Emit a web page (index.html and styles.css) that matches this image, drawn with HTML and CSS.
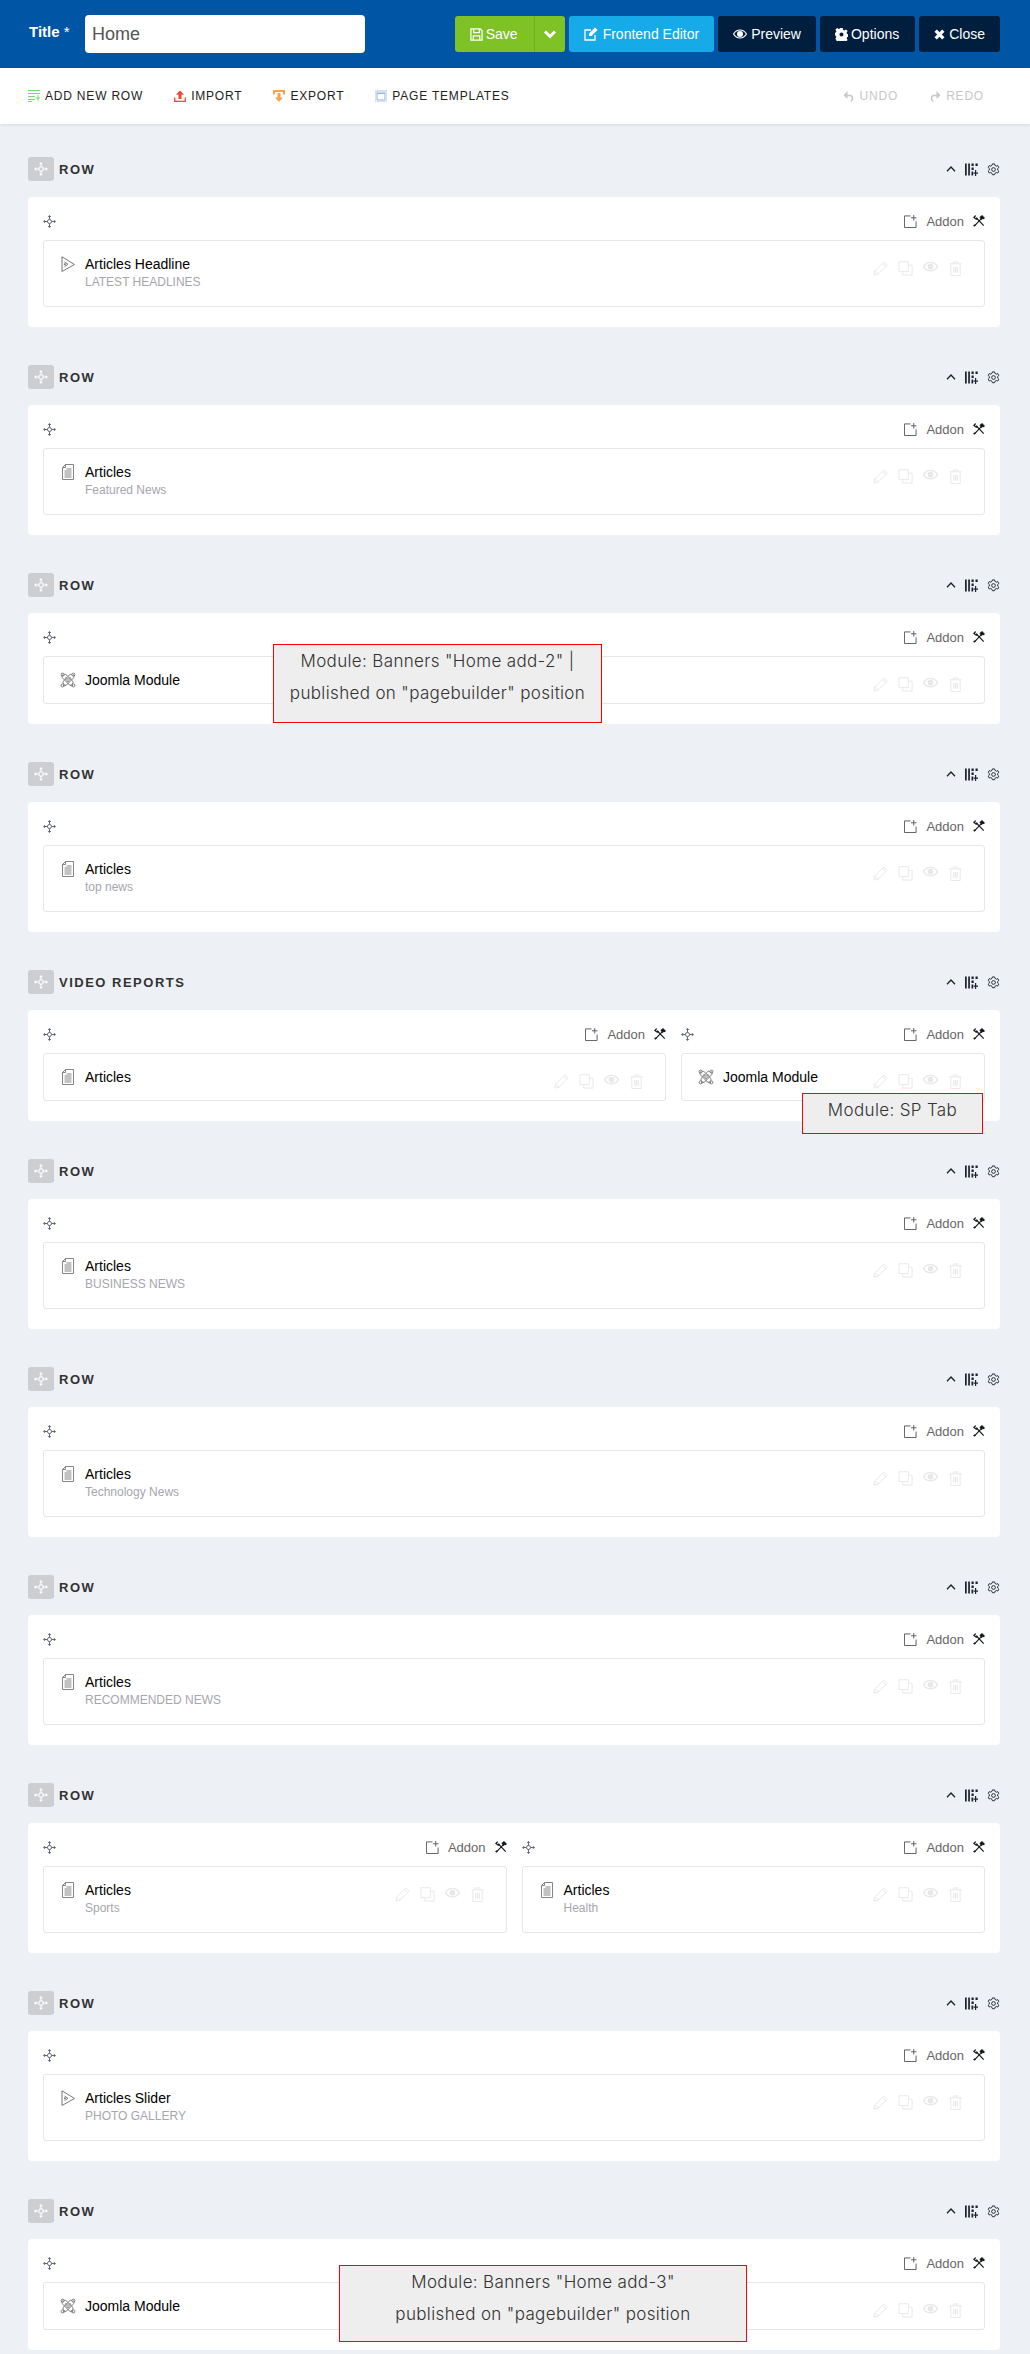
FILE: index.html
```html
<!DOCTYPE html>
<html>
<head>
  <meta charset="UTF-8">
  <title>Page Builder - Home</title>
  <link rel="stylesheet" href="styles.css">
</head>
<body>
  <!-- icon sprite -->
  <svg class="sprite" xmlns="http://www.w3.org/2000/svg">
    <symbol id="i-move" viewBox="0 0 16 16">
      <g fill="none" stroke="currentColor" stroke-width="1.2">
        <circle cx="8" cy="8" r="2.5"/>
        <path d="M8 1.5v4M8 10.5v4M1.5 8h4M10.5 8h4"/>
      </g>
      <path fill="currentColor" d="M8 0l2.200 2.600H5.800zM8 16l-2.200-2.600h4.400zM0 8l2.600-2.200v4.400zM16 8l-2.600 2.200V5.800z"/>
    </symbol>
    <symbol id="i-doc" viewBox="0 0 16 16">
      <g fill="none" stroke="currentColor" stroke-width=".9">
        <path d="M5.500 .5h8v15h-11V3.500zM5.500 .5v3h-3"/>
        <path d="M6.500 5h5M4.500 7h7M4.500 9h7M4.500 11h7M4.500 13h7"/>
      </g>
    </symbol>
    <symbol id="i-play" viewBox="0 0 16 16">
      <g fill="none" stroke="currentColor" stroke-width="1">
        <path d="M2 .8L14.500 8.500 2 15.500z"/>
        <path d="M4.500 6l3.500 2.300-3.500 2.300"/>
      </g>
      <circle cx="4.800" cy="8.300" r="1" fill="currentColor"/>
    </symbol>
    <symbol id="i-joomla" viewBox="0 0 16 16">
      <g fill="none" stroke="currentColor" stroke-width="1">
        <path d="M3 3.500C5 1 6.500 3 8 4.500l4 4c2 2 .5 4.500-1.500 4.500"/>
        <path d="M12.500 3.500C10.500 1 9 3 8 4.500l-4 4c-2 2-.5 4.500 1.500 4.500"/>
        <path d="M2.500 2.500c-1.500 2 0 3.500 1.500 5l4 4c1.500 1.500 3 3 5 2"/>
        <path d="M13.500 2.500c1.500 2 0 3.500-1.500 5l-4 4c-1.500 1.500-3 3-5 2"/>
        <path d="M5 6.500l3.500 3.500M11 6.500L7.500 10M5.500 5L8 7.500 10.500 5"/>
        <circle cx="2.600" cy="2.600" r="1.500"/><circle cx="13.400" cy="2.600" r="1.500"/>
        <circle cx="2.600" cy="13.400" r="1.500"/><circle cx="13.400" cy="13.400" r="1.500"/>
      </g>
    </symbol>
    <symbol id="i-addon" viewBox="0 0 14 14">
      <path fill="none" stroke="currentColor" stroke-width="1" d="M7 1H.500v12.500H13V7M10.500 0v6M7.500 3h6"/>
    </symbol>
    <symbol id="i-tools" viewBox="0 0 14 14">
      <path fill="none" stroke="currentColor" stroke-width="1.300" d="M2 12.500L9.500 4.500M4 3.500l8.500 9"/>
      <path fill="currentColor" d="M7.500 2.500L10.500 0l3.500 3.500-1.500 1.500-1-.5-1.500 1.500zM0 2.800L2.800 0l.7 1.500L2.300 2.700l1 1 1.200-1.200L5.500 4 3.800 5.700z"/>
      <path fill="currentColor" d="M1.800 10.700l1.500 1.500-1.600 1.600-1.500-1.500z"/>
    </symbol>
    <symbol id="i-pen" viewBox="0 0 16 16">
      <path fill="none" stroke="currentColor" stroke-width="1" d="M1 15l1-4.500L11.500 1 15 4.500 5.500 14zM2 10.500L5.500 14M10 2.500L13.500 6"/>
    </symbol>
    <symbol id="i-copy" viewBox="0 0 16 16">
      <path fill="none" stroke="currentColor" stroke-width="1" d="M1 .8h10v10.500H1zM11 4.500h4v10.500H5v-3.700"/>
    </symbol>
    <symbol id="i-eye" viewBox="0 0 16 16">
      <path fill="none" stroke="currentColor" stroke-width="1.500" d="M.5 6C2.500 3 5 1.500 8 1.500s5.500 1.500 7.500 4.500C13.500 9 11 10.500 8 10.500S2.500 9 .5 6z"/>
      <circle cx="8" cy="6" r="3" fill="currentColor"/>
    </symbol>
    <symbol id="i-trash" viewBox="0 0 16 16">
      <path fill="none" stroke="currentColor" stroke-width="1" d="M1.500 3h13M5.500 3V1h5v2M3 3v12.500h10V3"/>
      <path fill="currentColor" d="M5.500 6.500h1.200v6H5.500zM7.400 6.500h1.200v6H7.400zM9.300 6.500h1.200v6H9.300z"/>
    </symbol>
    <symbol id="i-chevron" viewBox="0 0 10 10">
      <path fill="none" stroke="currentColor" stroke-width="1.300" d="M1 7.200L5 3l4 4.200"/>
    </symbol>
    <symbol id="i-columns" viewBox="0 0 13 13">
      <path fill="currentColor" d="M0 .5h1.700v12H0zM3.200 .5h1.700v12H3.200zM6.500 .5h2.200v2.500H6.500zM10.500 .5h2.200v2.500h-2.200zM6.500 4.500h2.200V7H6.500zM6.500 8.500h1.700v4H6.500zM10 7h1.200v2.600H13.500v1.200h-2.300V13H10v-2.200H8.700V9.600H10z"/>
    </symbol>
    <symbol id="i-gear" viewBox="0 0 14 14">
      <g fill="none" stroke="currentColor" stroke-width="1">
        <path d="M5.800 1h2.400l.4 1.600 1.500.8 1.500-.6 1.100 2-1.200 1.100v1.800l1.200 1.100-1.100 2-1.500-.5-1.500.8-.4 1.500H5.800l-.4-1.500-1.500-.8-1.500.5-1.100-2 1.200-1.100V5.900L1.300 4.800l1.100-2 1.500.6 1.500-.8z"/>
        <circle cx="7" cy="7" r="2"/>
      </g>
    </symbol>
  </svg>

  <header class="topbar">
    <label class="title-label"><b>Title</b> *</label>
    <input class="title-input" type="text" value="Home">
    <div class="topbar-buttons">
      <div class="btn-split">
        <a class="btn btn-green btn-tight">
          <svg class="btn-icon btn-icon-mid" viewBox="0 0 14 14"><path fill="none" stroke="currentColor" stroke-width="1.300" d="M1 1h10l2 2v10H1zM4 1v4h6V1M3.500 13V8.500h7V13"/></svg>
          Save
        </a>
        <a class="btn btn-green btn-caret">
          <svg class="btn-icon" viewBox="0 0 14 14"><path fill="none" stroke="currentColor" stroke-width="3" d="M2 4.500l5 5 5-5"/></svg>
        </a>
      </div>
      <a class="btn btn-blue btn-wide">
        <svg class="btn-icon" viewBox="0 0 14 14"><path fill="none" stroke="currentColor" stroke-width="1.300" d="M11 8v5H1V3h6"/><path fill="currentColor" d="M5 6.500L11 .5 13.500 3l-6 6H5z"/></svg>
        Frontend Editor
      </a>
      <a class="btn btn-dark">
        <svg class="btn-icon" viewBox="0 0 14 14"><path fill="none" stroke="currentColor" stroke-width="1.200" d="M.5 7C2 4.500 4.300 3 7 3s5 1.500 6.500 4C12 9.500 9.700 11 7 11S2 9.500.5 7z"/><circle cx="7" cy="7" r="3" fill="currentColor"/></svg>
        Preview
      </a>
      <a class="btn btn-dark btn-tight">
        <svg class="btn-icon btn-icon-mid" viewBox="0 0 14 14"><path fill="currentColor" fill-rule="evenodd" d="M5.700 0h2.600l.4 2 1.300.6 1.800-1.100 1.800 1.800-1.100 1.800.6 1.300 2 .4v2.600l-2 .4-.6 1.300 1.100 1.800-1.800 1.800-1.800-1.100-1.300.6-.4 2H5.700l-.4-2-1.300-.6-1.800 1.100L.4 11.400l1.100-1.800-.6-1.300-2-.4V5.300l2-.4.6-1.300-1.100-1.800L2.200.0l1.800 1.100 1.300-.6zM7 4.800a2.200 2.200 0 1 0 0 4.400 2.200 2.200 0 0 0 0-4.400z"/></svg>
        Options
      </a>
      <a class="btn btn-dark">
        <svg class="btn-icon btn-icon-small" viewBox="0 0 10 10"><path fill="none" stroke="currentColor" stroke-width="3" d="M1.500 1.500l7 7M8.500 1.500l-7 7"/></svg>
        Close
      </a>
    </div>
  </header>

  <nav class="toolbar">
    <a class="tool">
      <svg class="tool-icon" viewBox="0 0 12 12"><path fill="none" stroke="#6fdc72" stroke-width="1" d="M0 .5h12M0 3.500h12M0 6.500h7M0 9.500h7M0 11.500h4M10 5v6M7.500 8h4.500"/></svg>
      ADD NEW ROW
    </a>
    <a class="tool">
      <svg class="tool-icon" viewBox="0 0 12 12"><path fill="#f4423c" d="M6 .5L10 4.800H7.500V9h-3V4.800H2z"/><path fill="none" stroke="#f4423c" stroke-width="1.300" d="M.7 7.500v3.800h10.600V7.500"/></svg>
      IMPORT
    </a>
    <a class="tool">
      <svg class="tool-icon" viewBox="0 0 12 12"><path fill="#f7a24d" d="M0 0h12v4.500h-2V2H2v2.500H0zM4.500 3h3v4.500H10L6 12 2 7.500h2.500z"/></svg>
      EXPORT
    </a>
    <a class="tool">
      <svg class="tool-icon" viewBox="0 0 12 12"><path fill="none" stroke="#a8c4ec" stroke-width="1" stroke-dasharray="1 1" d="M.5.500h11v11H.5z"/><path fill="#cfdcf2" d="M1 1h10v2.500H1z"/><path fill="none" stroke="#8fb2e4" stroke-width="1" d="M2 3.500h8V10H2z"/></svg>
      PAGE TEMPLATES
    </a>
    <a class="tool tool-off tool-undo">
      <svg class="tool-icon" viewBox="0 0 12 12"><path fill="none" stroke="currentColor" stroke-width="1.500" d="M3 5.500h4c3 0 3.500 5 .5 5.500"/><path fill="currentColor" d="M4.500 1v8L.5 5.300z"/></svg>
      UNDO
    </a>
    <a class="tool tool-off">
      <svg class="tool-icon" viewBox="0 0 12 12"><path fill="none" stroke="currentColor" stroke-width="1.500" d="M8 5.500H5c-3 0-3.500 5-.5 5.500"/><path fill="currentColor" d="M7.500 1v8l4-3.700z"/></svg>
      REDO
    </a>
  </nav>

  <main class="rows">

    <section class="row">
      <div class="row-head">
        <span class="row-handle"><svg><use href="#i-move"/></svg></span>
        <span class="row-title">ROW</span>
        <span class="row-actions"><svg class="ra-chevron"><use href="#i-chevron"/></svg><svg><use href="#i-columns"/></svg><svg><use href="#i-gear"/></svg></span>
      </div>
      <div class="card">
        <div class="col">
          <div class="col-head">
            <svg class="col-move"><use href="#i-move"/></svg>
            <span class="col-tools"><svg><use href="#i-addon"/></svg><span class="col-addon">Addon</span><svg class="col-wrench"><use href="#i-tools"/></svg></span>
          </div>
          <div class="addon">
            <svg class="addon-icon"><use href="#i-play"/></svg>
            <div class="addon-text"><div class="addon-name">Articles Headline</div><div class="addon-sub">LATEST HEADLINES</div></div>
            <span class="addon-actions"><svg><use href="#i-pen"/></svg><svg><use href="#i-copy"/></svg><svg><use href="#i-eye"/></svg><svg><use href="#i-trash"/></svg></span>
          </div>
        </div>
      </div>
    </section>

    <section class="row">
      <div class="row-head">
        <span class="row-handle"><svg><use href="#i-move"/></svg></span>
        <span class="row-title">ROW</span>
        <span class="row-actions"><svg class="ra-chevron"><use href="#i-chevron"/></svg><svg><use href="#i-columns"/></svg><svg><use href="#i-gear"/></svg></span>
      </div>
      <div class="card">
        <div class="col">
          <div class="col-head">
            <svg class="col-move"><use href="#i-move"/></svg>
            <span class="col-tools"><svg><use href="#i-addon"/></svg><span class="col-addon">Addon</span><svg class="col-wrench"><use href="#i-tools"/></svg></span>
          </div>
          <div class="addon">
            <svg class="addon-icon"><use href="#i-doc"/></svg>
            <div class="addon-text"><div class="addon-name">Articles</div><div class="addon-sub">Featured News</div></div>
            <span class="addon-actions"><svg><use href="#i-pen"/></svg><svg><use href="#i-copy"/></svg><svg><use href="#i-eye"/></svg><svg><use href="#i-trash"/></svg></span>
          </div>
        </div>
      </div>
    </section>

    <section class="row">
      <div class="row-head">
        <span class="row-handle"><svg><use href="#i-move"/></svg></span>
        <span class="row-title">ROW</span>
        <span class="row-actions"><svg class="ra-chevron"><use href="#i-chevron"/></svg><svg><use href="#i-columns"/></svg><svg><use href="#i-gear"/></svg></span>
      </div>
      <div class="card">
        <div class="col">
          <div class="col-head">
            <svg class="col-move"><use href="#i-move"/></svg>
            <span class="col-tools"><svg><use href="#i-addon"/></svg><span class="col-addon">Addon</span><svg class="col-wrench"><use href="#i-tools"/></svg></span>
          </div>
          <div class="addon">
            <svg class="addon-icon"><use href="#i-joomla"/></svg>
            <div class="addon-text"><div class="addon-name">Joomla Module</div></div>
            <span class="addon-actions"><svg><use href="#i-pen"/></svg><svg><use href="#i-copy"/></svg><svg><use href="#i-eye"/></svg><svg><use href="#i-trash"/></svg></span>
          </div>
        </div>
      </div>
      <div class="note note-add2">Module: Banners "Home add-2" |<br>published on "pagebuilder" position</div>
    </section>

    <section class="row">
      <div class="row-head">
        <span class="row-handle"><svg><use href="#i-move"/></svg></span>
        <span class="row-title">ROW</span>
        <span class="row-actions"><svg class="ra-chevron"><use href="#i-chevron"/></svg><svg><use href="#i-columns"/></svg><svg><use href="#i-gear"/></svg></span>
      </div>
      <div class="card">
        <div class="col">
          <div class="col-head">
            <svg class="col-move"><use href="#i-move"/></svg>
            <span class="col-tools"><svg><use href="#i-addon"/></svg><span class="col-addon">Addon</span><svg class="col-wrench"><use href="#i-tools"/></svg></span>
          </div>
          <div class="addon">
            <svg class="addon-icon"><use href="#i-doc"/></svg>
            <div class="addon-text"><div class="addon-name">Articles</div><div class="addon-sub">top news</div></div>
            <span class="addon-actions"><svg><use href="#i-pen"/></svg><svg><use href="#i-copy"/></svg><svg><use href="#i-eye"/></svg><svg><use href="#i-trash"/></svg></span>
          </div>
        </div>
      </div>
    </section>

    <section class="row">
      <div class="row-head">
        <span class="row-handle"><svg><use href="#i-move"/></svg></span>
        <span class="row-title">VIDEO REPORTS</span>
        <span class="row-actions"><svg class="ra-chevron"><use href="#i-chevron"/></svg><svg><use href="#i-columns"/></svg><svg><use href="#i-gear"/></svg></span>
      </div>
      <div class="card card-8-4">
        <div class="col">
          <div class="col-head">
            <svg class="col-move"><use href="#i-move"/></svg>
            <span class="col-tools"><svg><use href="#i-addon"/></svg><span class="col-addon">Addon</span><svg class="col-wrench"><use href="#i-tools"/></svg></span>
          </div>
          <div class="addon">
            <svg class="addon-icon"><use href="#i-doc"/></svg>
            <div class="addon-text"><div class="addon-name">Articles</div></div>
            <span class="addon-actions"><svg><use href="#i-pen"/></svg><svg><use href="#i-copy"/></svg><svg><use href="#i-eye"/></svg><svg><use href="#i-trash"/></svg></span>
          </div>
        </div>
        <div class="col">
          <div class="col-head">
            <svg class="col-move"><use href="#i-move"/></svg>
            <span class="col-tools"><svg><use href="#i-addon"/></svg><span class="col-addon">Addon</span><svg class="col-wrench"><use href="#i-tools"/></svg></span>
          </div>
          <div class="addon">
            <svg class="addon-icon"><use href="#i-joomla"/></svg>
            <div class="addon-text"><div class="addon-name">Joomla Module</div></div>
            <span class="addon-actions"><svg><use href="#i-pen"/></svg><svg><use href="#i-copy"/></svg><svg><use href="#i-eye"/></svg><svg><use href="#i-trash"/></svg></span>
          </div>
        </div>
      </div>
      <div class="note note-tab">Module: SP Tab</div>
    </section>

    <section class="row">
      <div class="row-head">
        <span class="row-handle"><svg><use href="#i-move"/></svg></span>
        <span class="row-title">ROW</span>
        <span class="row-actions"><svg class="ra-chevron"><use href="#i-chevron"/></svg><svg><use href="#i-columns"/></svg><svg><use href="#i-gear"/></svg></span>
      </div>
      <div class="card">
        <div class="col">
          <div class="col-head">
            <svg class="col-move"><use href="#i-move"/></svg>
            <span class="col-tools"><svg><use href="#i-addon"/></svg><span class="col-addon">Addon</span><svg class="col-wrench"><use href="#i-tools"/></svg></span>
          </div>
          <div class="addon">
            <svg class="addon-icon"><use href="#i-doc"/></svg>
            <div class="addon-text"><div class="addon-name">Articles</div><div class="addon-sub">BUSINESS NEWS</div></div>
            <span class="addon-actions"><svg><use href="#i-pen"/></svg><svg><use href="#i-copy"/></svg><svg><use href="#i-eye"/></svg><svg><use href="#i-trash"/></svg></span>
          </div>
        </div>
      </div>
    </section>

    <section class="row">
      <div class="row-head">
        <span class="row-handle"><svg><use href="#i-move"/></svg></span>
        <span class="row-title">ROW</span>
        <span class="row-actions"><svg class="ra-chevron"><use href="#i-chevron"/></svg><svg><use href="#i-columns"/></svg><svg><use href="#i-gear"/></svg></span>
      </div>
      <div class="card">
        <div class="col">
          <div class="col-head">
            <svg class="col-move"><use href="#i-move"/></svg>
            <span class="col-tools"><svg><use href="#i-addon"/></svg><span class="col-addon">Addon</span><svg class="col-wrench"><use href="#i-tools"/></svg></span>
          </div>
          <div class="addon">
            <svg class="addon-icon"><use href="#i-doc"/></svg>
            <div class="addon-text"><div class="addon-name">Articles</div><div class="addon-sub">Technology News</div></div>
            <span class="addon-actions"><svg><use href="#i-pen"/></svg><svg><use href="#i-copy"/></svg><svg><use href="#i-eye"/></svg><svg><use href="#i-trash"/></svg></span>
          </div>
        </div>
      </div>
    </section>

    <section class="row">
      <div class="row-head">
        <span class="row-handle"><svg><use href="#i-move"/></svg></span>
        <span class="row-title">ROW</span>
        <span class="row-actions"><svg class="ra-chevron"><use href="#i-chevron"/></svg><svg><use href="#i-columns"/></svg><svg><use href="#i-gear"/></svg></span>
      </div>
      <div class="card">
        <div class="col">
          <div class="col-head">
            <svg class="col-move"><use href="#i-move"/></svg>
            <span class="col-tools"><svg><use href="#i-addon"/></svg><span class="col-addon">Addon</span><svg class="col-wrench"><use href="#i-tools"/></svg></span>
          </div>
          <div class="addon">
            <svg class="addon-icon"><use href="#i-doc"/></svg>
            <div class="addon-text"><div class="addon-name">Articles</div><div class="addon-sub">RECOMMENDED NEWS</div></div>
            <span class="addon-actions"><svg><use href="#i-pen"/></svg><svg><use href="#i-copy"/></svg><svg><use href="#i-eye"/></svg><svg><use href="#i-trash"/></svg></span>
          </div>
        </div>
      </div>
    </section>

    <section class="row">
      <div class="row-head">
        <span class="row-handle"><svg><use href="#i-move"/></svg></span>
        <span class="row-title">ROW</span>
        <span class="row-actions"><svg class="ra-chevron"><use href="#i-chevron"/></svg><svg><use href="#i-columns"/></svg><svg><use href="#i-gear"/></svg></span>
      </div>
      <div class="card card-6-6">
        <div class="col">
          <div class="col-head">
            <svg class="col-move"><use href="#i-move"/></svg>
            <span class="col-tools"><svg><use href="#i-addon"/></svg><span class="col-addon">Addon</span><svg class="col-wrench"><use href="#i-tools"/></svg></span>
          </div>
          <div class="addon">
            <svg class="addon-icon"><use href="#i-doc"/></svg>
            <div class="addon-text"><div class="addon-name">Articles</div><div class="addon-sub">Sports</div></div>
            <span class="addon-actions"><svg><use href="#i-pen"/></svg><svg><use href="#i-copy"/></svg><svg><use href="#i-eye"/></svg><svg><use href="#i-trash"/></svg></span>
          </div>
        </div>
        <div class="col">
          <div class="col-head">
            <svg class="col-move"><use href="#i-move"/></svg>
            <span class="col-tools"><svg><use href="#i-addon"/></svg><span class="col-addon">Addon</span><svg class="col-wrench"><use href="#i-tools"/></svg></span>
          </div>
          <div class="addon">
            <svg class="addon-icon"><use href="#i-doc"/></svg>
            <div class="addon-text"><div class="addon-name">Articles</div><div class="addon-sub">Health</div></div>
            <span class="addon-actions"><svg><use href="#i-pen"/></svg><svg><use href="#i-copy"/></svg><svg><use href="#i-eye"/></svg><svg><use href="#i-trash"/></svg></span>
          </div>
        </div>
      </div>
    </section>

    <section class="row">
      <div class="row-head">
        <span class="row-handle"><svg><use href="#i-move"/></svg></span>
        <span class="row-title">ROW</span>
        <span class="row-actions"><svg class="ra-chevron"><use href="#i-chevron"/></svg><svg><use href="#i-columns"/></svg><svg><use href="#i-gear"/></svg></span>
      </div>
      <div class="card">
        <div class="col">
          <div class="col-head">
            <svg class="col-move"><use href="#i-move"/></svg>
            <span class="col-tools"><svg><use href="#i-addon"/></svg><span class="col-addon">Addon</span><svg class="col-wrench"><use href="#i-tools"/></svg></span>
          </div>
          <div class="addon">
            <svg class="addon-icon"><use href="#i-play"/></svg>
            <div class="addon-text"><div class="addon-name">Articles Slider</div><div class="addon-sub">PHOTO GALLERY</div></div>
            <span class="addon-actions"><svg><use href="#i-pen"/></svg><svg><use href="#i-copy"/></svg><svg><use href="#i-eye"/></svg><svg><use href="#i-trash"/></svg></span>
          </div>
        </div>
      </div>
    </section>

    <section class="row">
      <div class="row-head">
        <span class="row-handle"><svg><use href="#i-move"/></svg></span>
        <span class="row-title">ROW</span>
        <span class="row-actions"><svg class="ra-chevron"><use href="#i-chevron"/></svg><svg><use href="#i-columns"/></svg><svg><use href="#i-gear"/></svg></span>
      </div>
      <div class="card">
        <div class="col">
          <div class="col-head">
            <svg class="col-move"><use href="#i-move"/></svg>
            <span class="col-tools"><svg><use href="#i-addon"/></svg><span class="col-addon">Addon</span><svg class="col-wrench"><use href="#i-tools"/></svg></span>
          </div>
          <div class="addon">
            <svg class="addon-icon"><use href="#i-joomla"/></svg>
            <div class="addon-text"><div class="addon-name">Joomla Module</div></div>
            <span class="addon-actions"><svg><use href="#i-pen"/></svg><svg><use href="#i-copy"/></svg><svg><use href="#i-eye"/></svg><svg><use href="#i-trash"/></svg></span>
          </div>
        </div>
      </div>
      <div class="note note-add3">Module: Banners "Home add-3"<br>published on "pagebuilder" position</div>
    </section>

  </main>
</body>
</html>
```

FILE: styles.css
```css
body {
  margin: 0;
  background-color: #edf0f5;
  font-family: "Liberation Sans", Arial, sans-serif;
  font-size: 14px;
  color: #333;
}
.sprite {
  display: none;
}

/* top bar */
.topbar {
  display: flex;
  align-items: center;
  height: 68px;
  padding: 0 30px 0 29px;
  box-sizing: border-box;
  background-color: #0055a5;
}
.title-label {
  width: 56px;
  margin-bottom: 6px;
  color: #fff;
  font-size: 15px;
}
.title-input {
  width: 280px;
  height: 38px;
  box-sizing: border-box;
  padding: 0 7px;
  border: none;
  border-radius: 4px;
  background-color: #fff;
  color: #555;
  font-family: inherit;
  font-size: 18px;
}
.topbar-buttons {
  display: flex;
  gap: 4px;
  margin-left: auto;
}
.btn-split {
  display: flex;
}
.btn {
  display: flex;
  align-items: center;
  gap: 4px;
  height: 36px;
  padding: 0 15px;
  box-sizing: border-box;
  border-radius: 3px;
  color: #fff;
  font-size: 14px;
}
.btn-tight {
  gap: 3px;
  padding-right: 16px;
}
.btn-wide {
  gap: 5px;
}
.btn-icon {
  width: 14px;
  height: 14px;
}
.btn-icon-mid {
  width: 13px;
  height: 13px;
}
.btn-icon-small {
  width: 11px;
  height: 11px;
}
.btn-green {
  background-color: #7fc225;
  border-radius: 3px 0 0 3px;
}
.btn-caret {
  width: 31px;
  padding: 0 8px;
  border-left: 1px solid #70ad20;
  border-radius: 0 3px 3px 0;
}
.btn-blue {
  background-color: #16aae9;
}
.btn-dark {
  background-color: #001e3e;
}

/* tool bar */
.toolbar {
  display: flex;
  align-items: center;
  gap: 31px;
  height: 56px;
  padding: 0 46px 0 28px;
  background-color: #fff;
  box-shadow: 0 1px 3px rgba(0, 0, 0, .1);
}
.tool {
  display: flex;
  align-items: center;
  gap: 5px;
  color: #222;
  font-size: 12px;
  letter-spacing: .8px;
}
.tool-icon {
  width: 12px;
  height: 12px;
}
.tool-off {
  color: #c8c8c8;
}
.tool-undo {
  margin-left: auto;
}

/* rows */
.rows {
  padding: 33px 30px 0 28px;
}
.row {
  position: relative;
  margin-bottom: 38px;
}
.row:last-child {
  margin-bottom: 0;
}
.row-head {
  display: flex;
  align-items: center;
  height: 24px;
  margin-bottom: 16px;
}
.row-handle {
  display: flex;
  align-items: center;
  justify-content: center;
  width: 26px;
  height: 24px;
  margin-right: 5px;
  border-radius: 3px;
  background-color: #ccced2;
  color: #fff;
}
.row-handle svg {
  width: 14px;
  height: 14px;
}
.row-title {
  font-size: 13px;
  font-weight: bold;
  letter-spacing: 1.5px;
  color: #333;
}
.row-actions {
  display: flex;
  align-items: center;
  gap: 9px;
  margin-left: auto;
  color: #1a2230;
}
.row-actions svg {
  width: 13px;
  height: 13px;
}
.row-actions .ra-chevron {
  width: 10px;
  height: 10px;
}

/* cards */
.card {
  display: grid;
  grid-template-columns: 1fr;
  column-gap: 15px;
  padding: 17px 15px 20px;
  border-radius: 4px;
  background-color: #fff;
}
.card-8-4 {
  grid-template-columns: 623px 304px;
}
.card-6-6 {
  grid-template-columns: 1fr 1fr;
}
.col-head {
  display: flex;
  align-items: center;
  height: 14px;
  margin-bottom: 12px;
}
.col-move {
  width: 13px;
  height: 13px;
  color: #5d6475;
}
.col-tools {
  display: flex;
  align-items: center;
  gap: 9px;
  margin-left: auto;
  color: #666;
}
.col-tools svg {
  width: 13px;
  height: 13px;
  color: #555;
}
.col-tools .col-wrench {
  width: 12px;
  height: 12px;
  color: #14181f;
}
.col-addon {
  font-size: 13px;
  color: #666;
}
.addon {
  display: flex;
  padding: 13px 21px 13px 16px;
  border: 1px solid #e5e6e8;
  border-radius: 3px;
}
.addon-icon {
  flex: none;
  width: 16px;
  height: 16px;
  margin: 2px 9px 0 0;
  color: #777;
}
.addon-text {
  flex: 1;
}
.addon-name {
  color: #000;
  font-size: 14px;
  line-height: 20px;
}
.addon-sub {
  margin-bottom: 3px;
  color: #a6a6ad;
  font-size: 12px;
  line-height: 16px;
}
.addon-actions {
  display: flex;
  gap: 10px;
  height: 13px;
  margin-top: 7px;
  color: #e8e8e8;
}
.addon-actions svg {
  width: 15px;
  height: 15px;
}

/* annotations laid over the screenshot */
.note {
  position: absolute;
  box-sizing: border-box;
  border: 1px solid #f00;
  background-color: #eee;
  color: #333;
  font-family: Inter, "Liberation Sans", sans-serif;
  font-size: 17px;
  font-weight: 300;
  letter-spacing: .35px;
  line-height: 32px;
  text-align: center;
}
.note-add2 {
  left: 245px;
  top: 71px;
  width: 329px;
  height: 79px;
}
.note-tab {
  left: 774px;
  top: 123px;
  width: 181px;
  height: 41px;
}
.note-add3 {
  left: 311px;
  top: 66px;
  width: 408px;
  height: 77px;
}
```
